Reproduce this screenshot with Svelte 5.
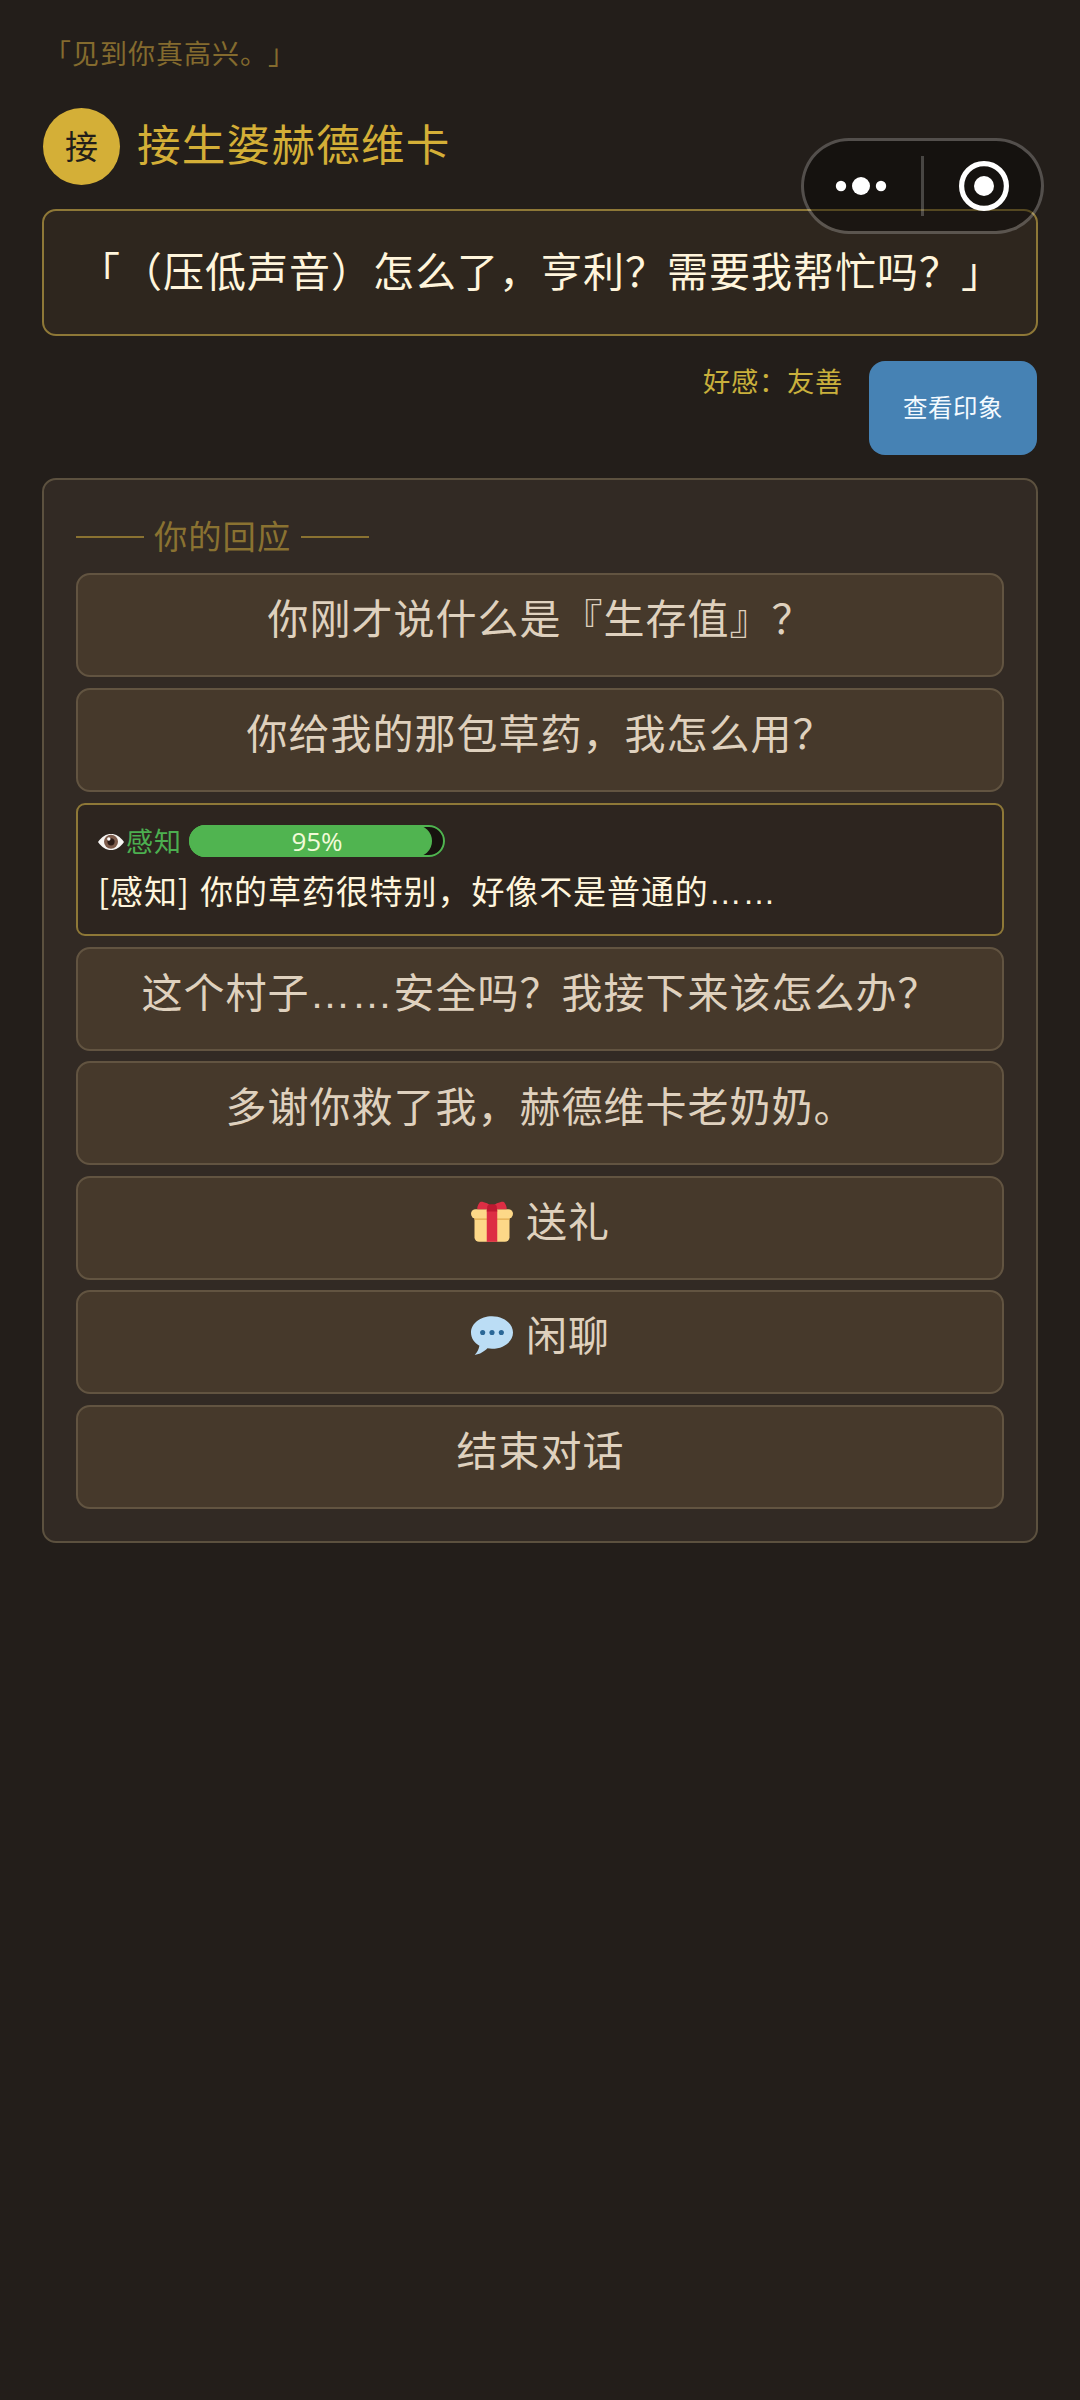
<script>
  const npc = { name: '接生婆赫德维卡', greeting: '「见到你真高兴。」' };
  const line = '「（压低声音）怎么了，亨利？需要我帮忙吗？」';
  const chance = 95;

  const options = [
    { kind: 'plain', text: '你刚才说什么是『生存值』？' },
    { kind: 'plain', text: '你给我的那包草药，我怎么用？' },
    { kind: 'check', skill: '感知', text: '你的草药很特别，好像不是普通的', trail: '……' },
    { kind: 'plain', text: '这个村子', trail: '……', rest: '安全吗？我接下来该怎么办？' },
    { kind: 'plain', text: '多谢你救了我，赫德维卡老奶奶。' },
    { kind: 'plain', icon: 'gift', text: '送礼' },
    { kind: 'plain', icon: 'chat', text: '闲聊' },
    { kind: 'plain', text: '结束对话' }
  ];
</script>

<main class="page">
  <p class="greeting">{npc.greeting}</p>

  <header class="speaker">
    <span class="avatar">{npc.name[0]}</span>
    <h1>{npc.name}</h1>
  </header>

  <section class="speech">{line}</section>

  <div class="relation">
    <span class="affinity">好感：友善</span>
    <button class="impression">查看印象</button>
  </div>

  <section class="panel">
    <h2><i></i><span>你的回应</span><i></i></h2>
    <div class="options">
      {#each options as o}
        {#if o.kind === 'check'}
          <button class="check">
            <span class="skill">
              <svg class="eye" viewBox="0 0 26 16">
                <path d="M0 8C4 2.600 8 0 13 0s9 2.600 13 8c-4 5.400-8 8-13 8S4 13.400 0 8z" fill="#f7f5f3" />
                <circle cx="13" cy="7.800" r="7" fill="#7d5c4c" />
                <circle cx="13" cy="7.800" r="3.600" fill="#2c1c17" />
                <circle cx="10.800" cy="5" r="1.700" fill="#fff" />
              </svg>
              <span class="skill-name">{o.skill}</span>
              <span class="bar">
                <span class="fill" style="width: {chance}%"></span>
                <span class="ring">{chance}%</span>
              </span>
            </span>
            <span class="check-text">[{o.skill}] {o.text}<span class="dots">{o.trail}</span></span>
          </button>
        {:else}
          <button class="option">
            {#if o.icon === 'gift'}
              <svg class="emoji" viewBox="0 0 36 36">
                <path d="M33 31a4 4 0 0 1-4 4H7a4 4 0 0 1-4-4V14h30z" fill="#fdd888" />
                <path d="M3 14h30v2H3z" fill="#e0aa4c" />
                <path d="M36 11a4 4 0 0 1-4 4H4a4 4 0 0 1 0-8h28a4 4 0 0 1 4 4z" fill="#fdd888" />
                <path d="M13.500 7.500h9V35h-9z" fill="#dd2e44" />
                <path d="M18 5.500C16.500 2.500 10 .300 8 .800 7 1.100 4.800 5.500 5.500 7h25c.700-1.500-1.500-5.900-2.500-6.200-2-.500-8.500 1.700-10 4.700z" fill="#dd2e44" />
                <path d="M14 4.200C15 3 16.500 2.800 18 2.800s3 .200 4 1.400L22.500 9h-9z" fill="#be1931" />
              </svg>
            {:else if o.icon === 'chat'}
              <svg class="emoji" viewBox="0 0 36 36">
                <path d="M18 1C8 1 0 7.300 0 15c0 4.800 2.900 8.900 7.200 11.400C6.800 29 5.500 32 3.200 34.200c4.300-.200 8.200-3 10.900-5.600 1.300.200 2.600.400 3.900.400 10 0 18-6.300 18-14S28 1 18 1z" fill="#bbddf5" />
                <circle cx="10" cy="15" r="2.200" fill="#2a6797" />
                <circle cx="18" cy="15" r="2.200" fill="#2a6797" />
                <circle cx="26" cy="15" r="2.200" fill="#2a6797" />
              </svg>
            {/if}
            <span>{o.text}{#if o.trail}<span class="dots">{o.trail}</span>{/if}{o.rest ?? ''}</span>
          </button>
        {/if}
      {/each}
    </div>
  </section>

  <nav class="capsule">
    <svg class="more" viewBox="0 0 52 20">
      <circle cx="6" cy="10" r="5.200" /><circle cx="26" cy="10" r="9" /><circle cx="46" cy="10" r="5.200" />
    </svg>
    <i></i>
    <svg class="target" viewBox="0 0 50 50">
      <circle cx="25" cy="25" r="22.400" fill="none" stroke="#fff" stroke-width="5.200" />
      <circle cx="25" cy="25" r="10" />
    </svg>
  </nav>
</main>

<style>
  :global(body) {
    background: #231e1a;
  }

  .page {
    position: relative;
    box-sizing: border-box;
    width: 1080px;
    height: 2400px;
    padding: 33px 42px 0;
    font-family: 'Noto Sans CJK SC', sans-serif;
    text-spacing-trim: space-all;
    color: #fff5dc;
  }

  .page * {
    box-sizing: border-box;
  }

  button {
    font: inherit;
    text-spacing-trim: inherit;
    margin: 0;
    padding: 0;
    color: inherit;
  }

  .greeting {
    margin: 0 0 35px;
    padding-left: 2px;
    font-size: 27px;
    letter-spacing: 1px;
    line-height: 40px;
    color: #846b2e;
  }

  .speaker {
    display: flex;
    align-items: center;
    gap: 17px;
    height: 77px;
    margin: 0 0 24px 1px;
  }

  .avatar {
    width: 77px;
    height: 77px;
    border-radius: 50%;
    background: #d4af37;
    color: #231e1a;
    font-size: 33px;
    line-height: 74px;
    text-align: center;
  }

  h1 {
    margin: 0;
    font-size: 43.600px;
    letter-spacing: 1.200px;
    font-weight: 400;
    line-height: 60px;
    padding-bottom: 9px;
    color: #d4af37;
  }

  .speech {
    height: 127px;
    border: 2px solid #8e7837;
    border-radius: 14px;
    background: #2e261e;
    padding-left: 35px;
    font-size: 41px;
    letter-spacing: 1px;
    line-height: 116px;
    white-space: nowrap;
  }

  .relation {
    display: flex;
    justify-content: flex-end;
    gap: 26px;
    margin: 25px 1px 23px 0;
  }

  .affinity {
    font-size: 27.300px;
    letter-spacing: 0.700px;
    line-height: 39px;
    color: #c9b03c;
  }

  .impression {
    width: 168px;
    height: 94px;
    border: 0;
    border-radius: 16px;
    background: #4682b4;
    font-size: 24.500px;
    letter-spacing: 0.500px;
    line-height: 90px;
    padding-bottom: 3px;
    color: #f4faff;
  }

  .panel {
    height: 1065px;
    border: 2px solid #5c513f;
    border-radius: 14px;
    background: #322a24;
    padding: 37px 32px 0;
  }

  h2 {
    display: flex;
    align-items: center;
    gap: 10px;
    height: 40px;
    margin: 0 0 16.490px;
    font-size: 33.300px;
    letter-spacing: 1px;
    font-weight: 400;
    line-height: 36px;
    color: #8a7231;
  }

  h2 span {
    padding-bottom: 4px;
  }

  h2 i {
    width: 68px;
    height: 2px;
    background: #8a7231;
  }

  .options {
    display: flex;
    flex-direction: column;
    gap: 10.510px;
  }

  .option {
    display: flex;
    align-items: flex-start;
    justify-content: center;
    gap: 13px;
    height: 104px;
    border: 2px solid #625441;
    border-radius: 14px;
    background: #46392b;
    padding-left: 1px;
    font-size: 41px;
    letter-spacing: 1px;
    line-height: 83px;
    white-space: nowrap;
    color: #dfd1be;
  }

  .dots {
    font-family: 'Liberation Sans', sans-serif;
    line-height: 1;
  }

  .emoji {
    width: 42px;
    height: 42px;
    margin-top: 23px;
  }

  .check {
    display: flex;
    flex-direction: column;
    align-items: flex-start;
    height: 133.400px;
    margin-top: 0.400px;
    border: 2px solid #8e7837;
    border-radius: 9px;
    background: #2d251f;
    padding: 20px 20px 0;
  }

  .skill {
    display: flex;
    align-items: center;
    height: 32px;
  }

  .eye {
    width: 26px;
    height: 16px;
    margin-top: 2px;
  }

  .skill-name {
    width: 56px;
    margin: 0 7px 0 2px;
    font-size: 27px;
    letter-spacing: 1px;
    line-height: 28px;
    color: #4caf50;
    white-space: nowrap;
  }

  .bar {
    position: relative;
    width: 256px;
    height: 32px;
    border-radius: 16px;
    background: #17130f;
  }

  .fill {
    display: block;
    height: 32px;
    border-radius: 16px;
    background: #50b450;
  }

  .ring {
    position: absolute;
    inset: 0;
    border: 2px solid #50b450;
    border-radius: 16px;
    font-family: 'Open Sans', sans-serif;
    font-size: 26px;
    line-height: 28px;
    text-align: center;
    color: #f2fbd8;
  }

  .check-text {
    margin-top: 9px;
    font-size: 33px;
    letter-spacing: 0.900px;
    line-height: 48px;
    word-spacing: 2px;
    white-space: nowrap;
  }

  .capsule {
    position: absolute;
    left: 801px;
    top: 138px;
    display: flex;
    align-items: center;
    width: 243px;
    height: 96px;
    border: 3px solid rgba(255, 255, 255, 0.220);
    border-radius: 48px;
    background: rgba(0, 0, 0, 0.400);
    background-clip: padding-box;
    padding-left: 31px;
    fill: #fff;
  }

  .capsule i {
    width: 3px;
    height: 60px;
    margin: 0 35px 0 34px;
    background: rgba(255, 255, 255, 0.220);
  }

  .more {
    width: 52px;
    height: 20px;
  }

  .target {
    width: 50px;
    height: 50px;
  }
</style>
